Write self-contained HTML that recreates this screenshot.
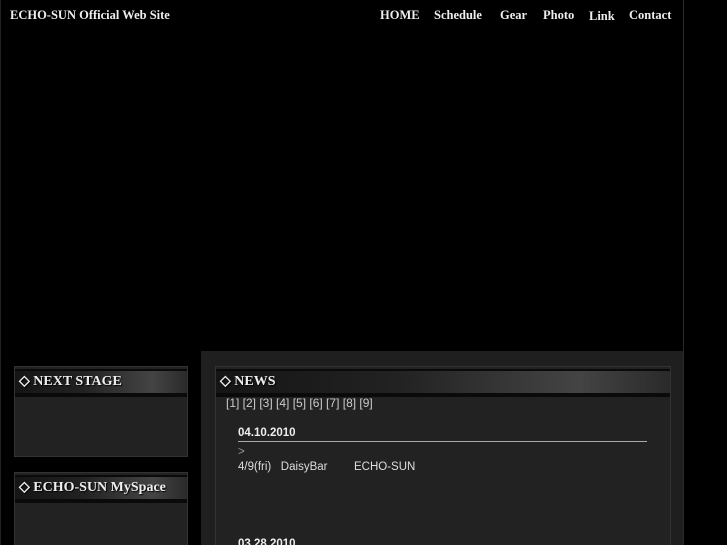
<!DOCTYPE html>
<html><head><style>
html,body{margin:0;padding:0}
body{background:#000;width:727px;height:545px;overflow:hidden;position:relative;font-family:"Liberation Sans",sans-serif}
#w{position:absolute;left:0;top:0;width:727px;height:545px;overflow:hidden}
.a{position:absolute}
.nav{font-family:"Liberation Serif",serif;font-weight:bold;font-size:12.5px;color:#eee;top:8px}
.box{position:absolute;background:#222;border:1px solid #333;box-sizing:border-box}
.hd{position:absolute;left:0;right:0;top:2px;height:22px;background:linear-gradient(90deg,#151515 0%,#222 40%,#444 80%,#2a2a2a 100%);border-top:2px solid #0a0a0a;border-bottom:4px solid #0a0a0a;font-family:"Liberation Serif",serif;font-weight:bold;font-size:14px;color:#eee;line-height:22px;padding-left:4px;text-shadow:1px 1px 1px #000;white-space:nowrap}
.t{font-size:11.5px;color:#ddd}
</style></head><body><div id="w">
<div class="a" style="left:0;top:0;width:682px;height:545px;border-left:1px solid #222;border-right:1px solid #2a2a2a"></div>
<div class="a nav" style="left:10px">ECHO-SUN Official Web Site</div>
<div class="a nav" style="left:380px">HOME</div>
<div class="a nav" style="left:434px">Schedule</div>
<div class="a nav" style="left:500px">Gear</div>
<div class="a nav" style="left:543px">Photo</div>
<div class="a nav" style="left:589px;top:9px">Link</div>
<div class="a nav" style="left:629px">Contact</div>
<div class="box" style="left:14px;top:366px;width:174px;height:91px"><div class="hd">◇ NEXT STAGE</div></div>
<div class="box" style="left:14px;top:472px;width:174px;height:80px"><div class="hd">◇ ECHO-SUN MySpace</div></div>
<div class="a" style="left:201px;top:351px;width:482px;height:194px;background:#1f1f1f"></div>
<div class="box" style="left:215px;top:366px;width:456px;height:190px"><div class="hd">◇ NEWS</div></div>
<div class="a t" style="left:226px;top:396px;color:#ccc;font-size:12px">[1] [2] [3] [4] [5] [6] [7] [8] [9]</div>
<div class="a t" style="left:238px;top:427px;font-weight:bold;color:#eee">04.10.2010</div>
<div class="a" style="left:238px;top:441px;width:409px;height:1px;background:#aaa"></div>
<div class="a t" style="left:238px;top:446px;color:#999">&gt;</div>
<div class="a t" style="left:238px;top:461px">4/9(fri)&nbsp;&nbsp; DaisyBar</div>
<div class="a t" style="left:354px;top:461px">ECHO-SUN</div>
<div class="a t" style="left:238px;top:538px;font-weight:bold;color:#eee">03.28.2010</div>
</div></body></html>
